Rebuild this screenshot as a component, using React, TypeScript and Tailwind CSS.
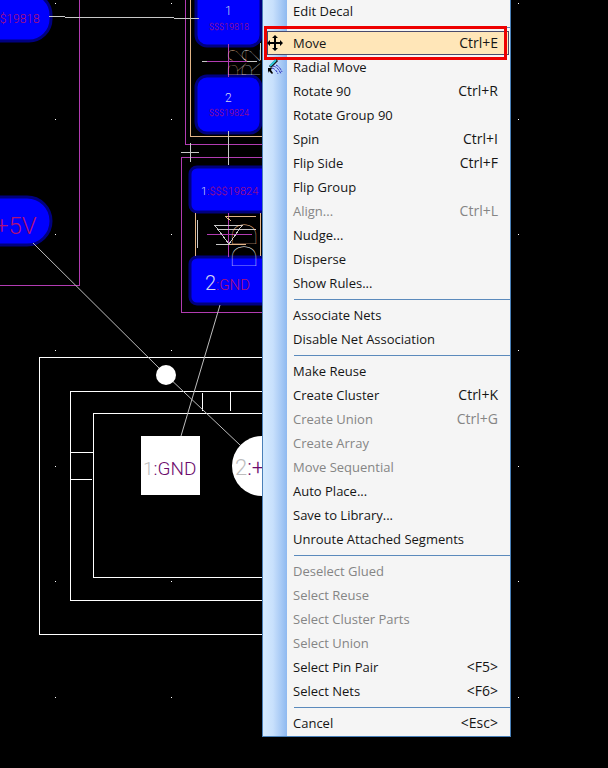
import React from 'react';

type MenuEntry = { label: string; shortcut?: string; disabled?: boolean; icon?: 'move' | 'radial' };

const groups: MenuEntry[][] = [
  [{ label: 'Edit Decal' }],
  [
    { label: 'Move', shortcut: 'Ctrl+E', icon: 'move' },
    { label: 'Radial Move', icon: 'radial' },
    { label: 'Rotate 90', shortcut: 'Ctrl+R' },
    { label: 'Rotate Group 90' },
    { label: 'Spin', shortcut: 'Ctrl+I' },
    { label: 'Flip Side', shortcut: 'Ctrl+F' },
    { label: 'Flip Group' },
    { label: 'Align...', shortcut: 'Ctrl+L', disabled: true },
    { label: 'Nudge...' },
    { label: 'Disperse' },
    { label: 'Show Rules...' },
  ],
  [{ label: 'Associate Nets' }, { label: 'Disable Net Association' }],
  [
    { label: 'Make Reuse' },
    { label: 'Create Cluster', shortcut: 'Ctrl+K' },
    { label: 'Create Union', shortcut: 'Ctrl+G', disabled: true },
    { label: 'Create Array', disabled: true },
    { label: 'Move Sequential', disabled: true },
    { label: 'Auto Place...' },
    { label: 'Save to Library...' },
    { label: 'Unroute Attached Segments' },
  ],
  [
    { label: 'Deselect Glued', disabled: true },
    { label: 'Select Reuse', disabled: true },
    { label: 'Select Cluster Parts', disabled: true },
    { label: 'Select Union', disabled: true },
    { label: 'Select Pin Pair', shortcut: '<F5>' },
    { label: 'Select Nets', shortcut: '<F6>' },
  ],
  [{ label: 'Cancel', shortcut: '<Esc>' }],
];

const gridXs = [55, 171, 287, 403, 518];
const gridYs = [3, 119, 234, 350, 466, 581, 697];

const MoveIcon: React.FC = () => (
  <svg width="16" height="16" viewBox="0 0 16 16" aria-hidden="true">
    <path d="M7 2h2v12h-2zM2 7h12v2h-12z" fill="#000" />
    <path d="M8 0l3 3h-6zM8 16l3-3h-6zM0 8l3-3v6zM16 8l-3-3v6z" fill="#000" />
  </svg>
);

const RadialIcon: React.FC = () => (
  <svg width="16" height="16" viewBox="0 0 16 16" aria-hidden="true">
    <path d="M3 8L10 1" stroke="#111" strokeWidth="3" />
    <path d="M3 7L9 1" stroke="#3cd" strokeWidth="2" />
    <path d="M1 9h4l-1 2 2 3-1 1-3-3-1 2z" fill="#000" />
    <path d="M6 7q5 1 8 8M5 9q4 1 6 6M9 6q4 2 6 7" stroke="#22b" strokeDasharray="3 1" fill="none" />
  </svg>
);

const Board: React.FC = () => (
  <svg className="block h-screen w-full bg-black" aria-label="PCB layout">
    <g fill="#fff" shapeRendering="crispEdges">
      {gridXs.map(x => gridYs.map(y => <rect key={`${x}-${y}`} x={x} y={y} width="1" height="1" />))}
    </g>

    {/* Copper pads */}
    <g fill="#0000fe" stroke="#000080" strokeWidth="3">
      <rect x="-60" y="-7" width="111" height="48" rx="22" />
      <rect x="-60" y="197" width="111" height="48" rx="24" />
      <rect x="196" y="-20" width="65" height="66" rx="11" />
      <rect x="196" y="76" width="65" height="57" rx="11" />
      <rect x="190" y="167" width="90" height="45" rx="7" />
      <rect x="190" y="257" width="90" height="47" rx="7" />
    </g>

    {/* Placement outlines */}
    <g fill="none" stroke="#b23cb2" shapeRendering="crispEdges">
      <path d="M79.5 0V285.5H0" />
      <path d="M185.5 0V144.5H270" />
      <path d="M270 157.5H181.5V312.5H270" />
      <path d="M207 61.5H247M228.5 44V77M207 234.5H252M228.5 213V257" />
    </g>
    <g fill="none" stroke="#e2b487" shapeRendering="crispEdges">
      <path d="M190.5 0V136.5H270M195.5 213V256M260.5 213V256M225 216.5H256M226 217L231 221M229 244.5H246" />
    </g>
    <g fill="none" stroke="#c8c8c8" shapeRendering="crispEdges">
      <path d="M181 152.5H199M190.5 143V162M228.5 131V165M202 61.5H207M247 61.5H257" />
      <path d="M197.5 220V248M216 244.5H229M215 225.5H242L229 244ZM219 229.5H256M260.5 43V60" />
      <path d="M49 16.5H65M65 17.5H174M174 18.5H199" />
    </g>

    {/* Silkscreen */}
    <g className="font-['Lato'] font-thin">
      <text fontSize="26" transform="translate(246 78) rotate(-90)" fill="#ffd0a0">R2</text>
      <text fontSize="26" transform="translate(260 78) rotate(-90)" fill="#fff">R2</text>
      <text fontSize="34" transform="translate(256 248) rotate(-90)" fill="#ffd0a0">D</text>
      <text fontSize="34" transform="translate(256 270) rotate(-90)" fill="#fff">D</text>
    </g>

    {/* Part body */}
    <g fill="none" stroke="#fff" shapeRendering="crispEdges">
      <path d="M270 357.5H39.5V634.5H270M270 391.5H70.5V600.5H270M270 413.5H93.5V577.5H270" />
      <path d="M202.5 393V411M230.5 391V411M70 452.5H93M70 479.5H92" />
    </g>
    <path d="M33 243L166 375L240 445M220 305L181 436" fill="none" stroke="#bdbdbd" />
    <g fill="#fff">
      <circle cx="166" cy="375" r="10" />
      <rect x="141" y="436" width="59" height="59" />
      <circle cx="262" cy="466" r="30" />
    </g>

    {/* Pin and net names */}
    <g className="font-['Roboto',sans-serif] font-light" fill="#b01078">
      <text x="-7" y="23" fontSize="12">$$19818</text>
      <text x="-5" y="234" fontSize="24">+5V</text>
      <text x="209" y="30" fontSize="9">$$$19818</text>
      <text x="209" y="116" fontSize="9">$$$19824</text>
      <text x="201" y="195" fontSize="11">
        <tspan fill="#d4d4f4">1</tspan>:$$$19824
      </text>
      <text x="205" y="290" fontSize="15">
        <tspan fill="#d4d4f4" fontSize="20">2</tspan>:GND
      </text>
      <text x="225" y="15" fontSize="12" fill="#d4d4f4">1</text>
      <text x="225" y="102" fontSize="12" fill="#d4d4f4">2</text>
      <text x="143" y="475" fontSize="19" fill="#6c0a6c">
        <tspan fill="#bdbdbd">1</tspan>:GND
      </text>
      <text x="235" y="475" fontSize="22" fill="#6c0a6c">
        <tspan fill="#bdbdbd">2</tspan>:+
      </text>
    </g>
  </svg>
);

const MenuItem: React.FC<{ entry: MenuEntry }> = ({ entry }) => {
  const active = entry.icon === 'move';
  return (
    <button
      type="button"
      role="menuitem"
      disabled={entry.disabled}
      className={`relative flex h-6 w-full items-center pr-3 text-left ${
        entry.disabled ? 'text-[#858585]' : 'text-[#151515]'
      }`}
    >
      {active && (
        <>
          <span className="absolute inset-y-0 left-1 right-px border border-[#4a4a6a] bg-[#ffe6b8]" />
          <span className="absolute -inset-y-[5px] left-px right-[3px] border-3 border-[#ee0000]" />
        </>
      )}
      <span className="relative flex w-[30px] shrink-0 pl-1">
        {entry.icon === 'move' && <MoveIcon />}
        {entry.icon === 'radial' && <RadialIcon />}
      </span>
      <span className="relative flex-1 text-[13px]">{entry.label}</span>
      <span className="relative text-[14px]">{entry.shortcut}</span>
    </button>
  );
};

const App: React.FC = () => (
  <main className="relative overflow-hidden bg-black">
    <Board />
    <div
      role="menu"
      className="absolute -top-px left-[262px] w-[249px] border-x border-b border-[#4a80b8] bg-[linear-gradient(to_right,#d5ebff_0px,#c8e0fc_10px,#8fb9f0_24px,#f5f5f5_24px)] pb-px font-['Open_Sans','Noto_Sans',sans-serif] leading-6"
    >
      {groups.map((group, index) => (
        <React.Fragment key={group[0].label}>
          {index > 0 && (
            <div role="separator" className="flex h-2 items-center pl-[31px]">
              <div className="h-px w-full bg-[#5b8abc]" />
            </div>
          )}
          {group.map(entry => (
            <MenuItem key={entry.label} entry={entry} />
          ))}
        </React.Fragment>
      ))}
    </div>
  </main>
);

export default App;
